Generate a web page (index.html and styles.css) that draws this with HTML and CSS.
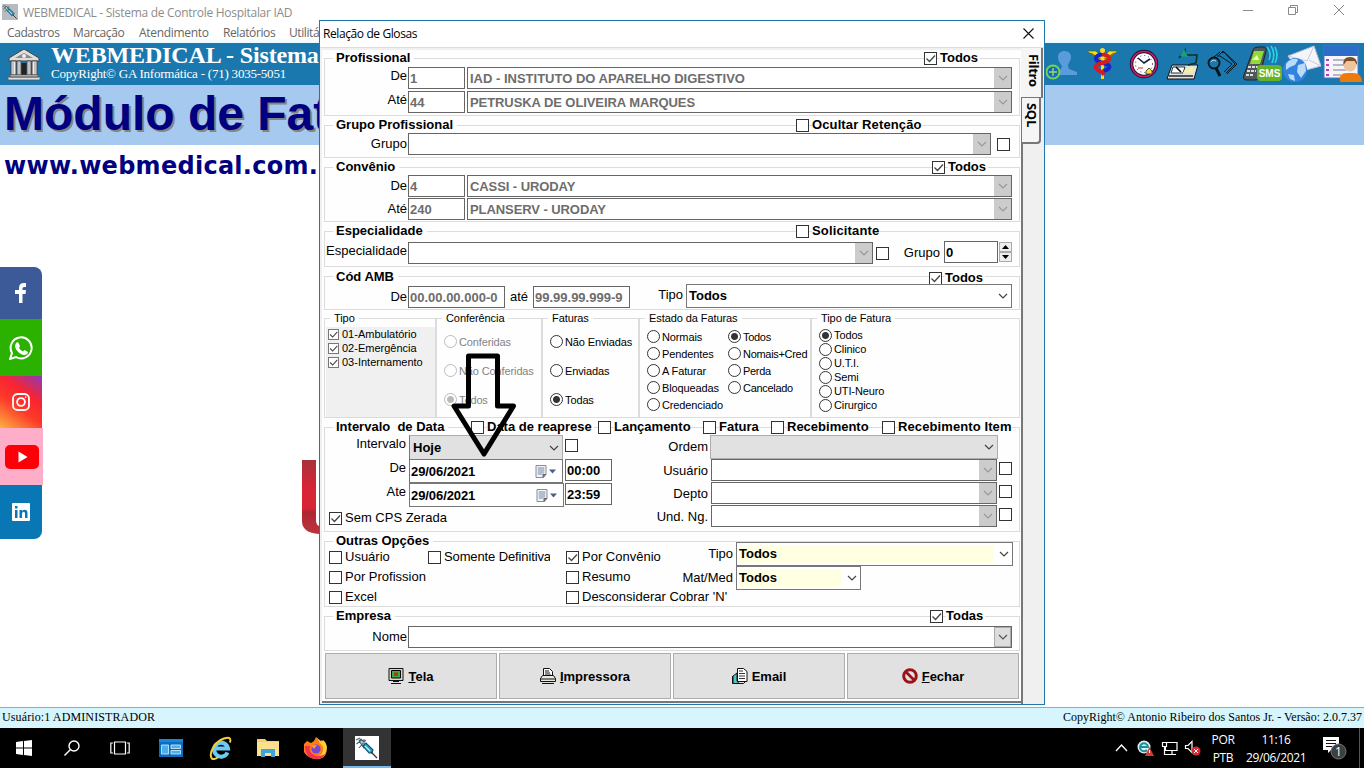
FILE: index.html
```
<!DOCTYPE html>
<html lang="pt-BR">
<head>
<meta charset="utf-8">
<title>WEBMEDICAL - Sistema de Controle Hospitalar IAD</title>
<link rel="stylesheet" href="styles.css">
</head>
<body>
<svg class="defs" width="0" height="0" aria-hidden="true">
  <symbol id="chev" viewBox="0 0 10 6"><path d="M1 1l4 4 4-4" fill="none" stroke="currentColor" stroke-width="1.2"/></symbol>
  <symbol id="tick" viewBox="0 0 13 13"><path d="M2.500 6.500l3 3 5.500-6" fill="none" stroke="#444" stroke-width="1.3"/></symbol>
  <symbol id="cal" viewBox="0 0 22 13"><path d="M1 .5h10v9l-2.500 3H1z" fill="#f2f4f8" stroke="#8a8a90"/><path d="M2.500 3h7M2.500 5h7M2.500 7h7M2.500 9h5M4 2v8M6 2v8M8 2v7" stroke="#8fa0bd" stroke-width=".8"/><path d="M8 12.500v-3h3" fill="#777" stroke="#666"/><path d="M14 4.500h7l-3.500 4z" fill="#41618f"/></symbol>
  <symbol id="syringe" viewBox="0 0 24 24"><path d="M4 5l2-2 6 6-3 3zM1 4l4-2M1.500 8l5-4M4 12l7-8M9 3v3" fill="#a9cbd8" stroke="#46626e" stroke-width="1.100"/><path d="M8 10l3-3 7 7-1 3-3 0z" fill="#27a5c4" stroke="#174c73" stroke-width="1.100"/><path d="M10 10l5 5" fill="none" stroke="#bfeef5" stroke-width="1.200"/><path d="M16 16l6 6" stroke="#333" stroke-width="1.300"/></symbol>
</svg>
<div class="app">
  <header class="titlebar">
    <svg class="app-ico" width="16" height="16" viewBox="0 0 24 24"><use href="#syringe"/></svg>
    <span class="app-title">WEBMEDICAL - Sistema de Controle Hospitalar IAD</span>
    <svg class="winctl" width="102" height="12" viewBox="0 0 102 12" fill="none" stroke="#8a8a8a"><path d="M0 6.500h10M45.500 3.500h7v7h-7zM47.500 3V1.500h7v7H53M91 1l10 10M101 1L91 11"/></svg>
  </header>
  <nav class="menubar"><span class="m1">Cadastros</span><span class="m2">Marcação</span><span class="m3">Atendimento</span><span class="m4">Relatórios</span><span>Utilitários</span></nav>
  <div class="brandbar">
    <svg class="bank" width="34" height="34" viewBox="0 0 34 34"><path d="M2 11L17 2l15 9v3H2z" fill="#ddd" stroke="#444"/><path d="M8 11l9-5 9 5z" fill="#888"/><circle cx="17" cy="9" r="2" fill="#eee"/><path d="M4 14h5v14H4zM10 14h4v14h-4zM20 14h4v14h-4zM25 14h5v14h-5z" fill="#eee" stroke="#444"/><path d="M14.500 16h5v12h-5z" fill="#222"/><path d="M6 15v12M12 15v12M22 15v12M28 15v12" stroke="#999"/><path d="M3 28h28v2H3zM1 30h32v3H1z" fill="#ddd" stroke="#555" stroke-width=".8"/></svg>
    <div class="brand"><b>WEBMEDICAL - Sistema</b><span>CopyRight© GA Informática - (71) 3035-5051</span></div>
    <div class="tools">
      <svg width="34" height="34" viewBox="0 0 34 34"><path d="M12 10c0-8 13-8 13 0 0 4-3 6-3 9l1 3 8 3v3H11v-3l4-3 1-3c-2-3-4-5-4-9z" fill="#5a9bdc"/><circle cx="7" cy="25" r="6.500" fill="#1b63c8" stroke="#6fd84a" stroke-width="2"/><path d="M7 21v8M3 25h8" stroke="#8fe04e" stroke-width="1.500"/></svg>
      <svg width="34" height="34" viewBox="0 0 34 34"><path d="M1 4h9l5 5v5l-7-5zM32 4h-9l-5 5v5l7-5z" fill="#f3df18" stroke="#665c00" stroke-width=".7"/><path d="M5 6l9 6M28 6l-9 6" stroke="#665c00"/><path d="M16.500 4v28" stroke="#f5dc20" stroke-width="3"/><path d="M17 7c-10 2-9 7 0 9s8 6 0 8" fill="none" stroke="#1526c9" stroke-width="4"/><path d="M16 7c10 2 9 7 0 9s-8 6 0 9l2 3" fill="none" stroke="#db1920" stroke-width="4"/><circle cx="16.500" cy="3.500" r="2.500" fill="#f5dc20"/></svg>
      <svg width="34" height="34" viewBox="0 0 34 34"><circle cx="18" cy="17" r="12.500" fill="#fff" stroke="#201030" stroke-width="3.500"/><circle cx="18" cy="17" r="12.500" fill="none" stroke="#cf1f62" stroke-width="1.600"/><circle cx="18" cy="17" r="8.500" fill="none" stroke="#238" stroke-dasharray="1 3"/><path d="M12 11l6 5 6-4" fill="none" stroke="#14233b" stroke-width="1.600"/><path d="M20 27v-3l3-3 3 3v3z" fill="#f8df40" stroke="#332" stroke-width=".8"/><path d="M12 21h5" stroke="#c33"/></svg>
      <svg width="34" height="34" viewBox="0 0 34 34"><path d="M6 18h26l-4 14H1z" fill="#dfe3e3" stroke="#111"/><path d="M7 20h12l-2 6H5z" fill="#fff" stroke="#234"/><path d="M18 24c2-4 9-5 10-2l-2 4h-9z" fill="#f6eda8"/><path d="M13 11l6-8v5h12l-1 8-8 2" fill="none" stroke="#0a3020" stroke-width="1.500"/><path d="M14 9l4-7 4 8z" fill="#12a572"/><path d="M3 29h24" stroke="#555" stroke-width="2"/><path d="M10 20l5 5" stroke="#000" stroke-width="1.500"/></svg>
      <svg width="34" height="34" viewBox="0 0 34 34" fill="none" stroke="#06141c"><path d="M13 8l4-4 14 13-10 10M16 6l2-1 11 12-9 9M11 9l3 0 12 8-8 8"/><path d="M8 10l6-5"/><circle cx="8" cy="16" r="5.500" stroke-width="1.800"/><path d="M10 21l4 8" stroke-width="3"/><path d="M5 15c1-2 3-2 5-1" stroke="#cde"/></svg>
      <svg width="42" height="38" viewBox="0 0 42 38"><path d="M11 5q1-3 5-3h5q4 0 3 4l-6 24q-1 5-5 5H5q-5 0-3-5z" fill="#51585a" stroke="#222"/><path d="M12 6h10l-4 13H8z" fill="#8fdc36"/><path d="M10 15l5-5 2 5z" fill="#e7ffc0"/><path d="M6 22h10M5 26h9M4 30h8" stroke="#ddd" stroke-width="2" stroke-dasharray="3 1"/><path d="M25 2q5 6 2 13M29 1q5 7 1 17M33 2q4 8 0 16" fill="none" stroke="#29d4e8" stroke-width="1.600"/><rect x="15" y="20" width="25" height="16" rx="4" fill="#66b32a"/><text x="27.500" y="32" text-anchor="middle" class="sms">SMS</text></svg>
      <svg width="40" height="38" viewBox="0 0 40 38"><path d="M6 11L32 1l7 20-22 6z" fill="#f4f5fb" stroke="#b9bdd0"/><path d="M6 11l19 5 7-15M39 21L27 15" fill="none" stroke="#c4c8dc"/><circle cx="13" cy="25" r="12" fill="#3282df"/><path d="M4 19c4-6 10-6 12-4l-3 5-5 2-4 3zM16 20l7-2 1 8-5 7-4-6zM6 29l6 1 1 6-5-2z" fill="#b9dcfa"/></svg>
      <svg width="40" height="38" viewBox="0 0 40 38"><path d="M1 1h34v32H1z" fill="#f5f5fb" stroke="#4a77bf"/><path d="M1 1h34v10H1z" fill="#2d6dc8"/><path d="M10 15h14M10 20h12M10 25h13M10 30h8" stroke="#b6b9c5" stroke-width="2"/><path d="M3 15h3M3 20h3M3 25h3M3 30h3" stroke="#c535c8" stroke-width="2"/><path d="M17 37q-2-9 7-9h6q9 0 9 9z" fill="#ee7a0c"/><circle cx="27" cy="20" r="6.500" fill="#efc49a"/><path d="M20.500 20q-1-8 6.500-8t7 8l-2.500-4h-8z" fill="#7b4c28"/></svg>
    </div>
  </div>
  <div class="banner">Módulo de Faturamento</div>
  <main class="desktop">
    <div class="site">www.webmedical.com.br</div>
    <aside class="social">
      <a class="fb"><svg width="14" height="22" viewBox="0 0 14 22"><path d="M5 21V12H1V8h4V6q0-5 5-5h2v4h-2q-1.500 0-1.500 1.500V8H12l-.5 4h-3v9z" fill="#fff"/></svg></a>
      <a class="wa"><svg width="24" height="24" viewBox="0 0 24 24"><path d="M1 23l2-6a10.500 10.500 0 1 1 4 4z" fill="none" stroke="#fff" stroke-width="2"/><path d="M7 7l2-1 2 4-1 2q1.500 2.500 4 3.500l1.500-1.500 3.500 2q0 3-4 3c-4-.5-9-5-9-9.500z" fill="#fff"/></svg></a>
      <a class="ig"><svg width="18" height="18" viewBox="0 0 18 18" fill="none" stroke="#fff" stroke-width="1.800"><rect x="1" y="1" width="16" height="16" rx="4.500"/><circle cx="9" cy="9" r="3.900"/><path d="M13 4.200h1.200"/></svg></a>
      <a class="yt"><svg width="36" height="26" viewBox="0 0 36 26"><rect x="1" y="1" width="34" height="24" rx="5" fill="#fb0007"/><path d="M14.500 7.500v11l9-5.500z" fill="#fff"/></svg></a>
      <a class="li"><svg width="18" height="18" viewBox="0 0 18 18"><rect width="18" height="18" rx="1" fill="#fff"/><path d="M3 7h2.500v8H3zM3 3h2.500v2.500H3zM7.500 7H10v1.200Q11 6.800 12.500 6.800q3 0 3 3.200v5H13v-4.500q0-1.700-1.300-1.700T10 10.500V15H7.500z" fill="#0a78b4"/></svg></a>
    </aside>
    <svg class="logo" width="17" height="74" viewBox="0 0 17 74"><defs><linearGradient id="lg" x2="0" y2="1"><stop offset="0" stop-color="#a83238"/><stop offset=".4" stop-color="#d92435"/><stop offset=".65" stop-color="#d62436"/><stop offset=".7" stop-color="#b02630"/><stop offset="1" stop-color="#b93540"/></linearGradient></defs><path d="M0 0h14v60q0 5 3 6v8Q0 73 0 61z" fill="url(#lg)"/></svg>
  </main>
  <footer class="status"><span>Usuário:1 ADMINISTRADOR</span><span class="copy">CopyRight© Antonio Ribeiro dos Santos Jr. - Versão: 2.0.7.37</span></footer>
  <footer class="taskbar">
    <div class="tk"><svg width="16" height="16" viewBox="0 0 16 16"><path d="M0 2l7-1v6.500H0zM8 1l8-1v7.500H8zM0 8.500h7V15l-7-1zM8 8.500h8V16l-8-1z" fill="#fff"/></svg></div>
    <div class="tk"><svg width="16" height="16" viewBox="0 0 16 16" fill="none" stroke="#fff" stroke-width="1.400"><circle cx="10" cy="6" r="5"/><path d="M6.500 9.500L.5 15.500"/></svg></div>
    <div class="tk"><svg width="20" height="14" viewBox="0 0 20 14" fill="none" stroke="#fff" stroke-width="1.200"><path d="M4.500 1h11v12h-11zM3 2H.8v10H3M17 2h2.200v10H17"/></svg></div>
    <div class="tk t4"><svg width="24" height="18" viewBox="0 0 24 18"><path d="M0 0h24v18H0z" fill="#0d6cbf"/><path d="M0 0h24v3H0z" fill="#1a85dc"/><path d="M2.500 6h7v9h-7zM12 6h9.500v3.500H12zM12 11.500h9.500V15H12z" fill="#47b1ed" stroke="#d8f1ff" stroke-width=".8"/></svg></div>
    <div class="tk"><svg width="23" height="24" viewBox="0 0 23 24"><path d="M18.500 16.500a7 7 0 1 1 .5-4H7" fill="none" stroke="#6ccbf5" stroke-width="4"/><path d="M2.500 22C0 17 5 6 15 2.500c6-2 7 0 6 4M2.500 22c1 2 4 1 7-1" fill="none" stroke="#f4cf39" stroke-width="2"/></svg></div>
    <div class="tk"><svg width="22" height="20" viewBox="0 0 22 20"><path d="M0 1h8l2 2h12v15H0z" fill="#f7cf62"/><path d="M0 4h22v14H0z" fill="#fbe08d"/><path d="M4 19v-8h14v8h-4v-4H8v4z" fill="#3fa4dc"/></svg></div>
    <div class="tk"><svg width="24" height="24" viewBox="0 0 24 24"><path d="M3 5l4 2 3-2 2-4 3 5 3-2 4 6q2 9-4 12T5 21-1 9z" fill="#ff7a1b"/><path d="M12 1l3 5 4 5q1 6-4 9 8 0 8-9-1-5-4-7l-1 2z" fill="#ffcf32"/><path d="M1 10q0 12 11 13 6 0 9-5-6 4-11 1-6-3-4-9z" fill="#f3304e"/><circle cx="12" cy="13" r="4.500" fill="#7447d6"/><path d="M7 9l6 0-3 4z" fill="#ff9a26"/></svg></div>
    <div class="tk active"><div class="syr"><svg width="24" height="24" viewBox="0 0 24 24"><use href="#syringe"/></svg></div></div>
    <div class="tray">
      <svg width="86" height="18" viewBox="0 0 86 18"><path d="M1 12l5.500-6 5.500 6" fill="none" stroke="#fff" stroke-width="1.300"/><circle cx="29" cy="8" r="6.500" fill="#dff3f5"/><path d="M32 11a4 4 0 1 1 1-3h-7" fill="none" stroke="#1d8c9b" stroke-width="2"/><path d="M30 17l4.500-9 4.500 9z" fill="#cf3d35"/><path d="M34.500 11v3" stroke="#fff"/><g fill="none" stroke="#fff" stroke-width="1.200"><path d="M52 3.500h10v8H50.500V8M57 12v3M52 15.500h9M47.500 3.500h4v4h-4zM49.500 7.500v8h3"/><path d="M70.500 6.500H73l4-4v11l-4-4h-2.500z"/></g><circle cx="81" cy="12" r="4.500" fill="#d92b35"/><path d="M79 10l4 4M83 10l-4 4" stroke="#fff"/></svg>
      <div class="two lang"><span>POR</span><span>PTB</span></div>
      <div class="two clock"><span>11:16</span><span>29/06/2021</span></div>
      <svg width="25" height="24" viewBox="0 0 25 24"><path d="M0 1h16v13H8l-3 3v-3H0z" fill="#fff"/><path d="M3 4.500h10M3 7.500h10M3 10.500h6" stroke="#111"/><circle cx="15.500" cy="15.500" r="7.500" fill="#3f3f3f" stroke="#777"/><text x="15.500" y="20" text-anchor="middle" class="num">1</text></svg>
      <i class="peek"></i>
    </div>
  </footer>
</div>

<section class="dialog">
  <div class="dlg-title"><span>Relação de Glosas</span><svg width="11" height="11" viewBox="0 0 11 11"><path d="M.5.5l10 10M10.500.5l-10 10" stroke="#111" stroke-width="1.100"/></svg></div>
  <div class="dlg-body">
    <div class="page">

      <div class="group g1">
        <div class="head h1"><b class="lg">Profissional</b><span></span><label class="ck"><i class="box"><svg><use href="#tick"/></svg></i><b>Todos</b></label></div>
        <div class="row pair"><span class="lb">De</span><div class="in">1</div><div class="cb">IAD - INSTITUTO DO APARELHO DIGESTIVO<i><svg><use href="#chev"/></svg></i></div></div>
        <div class="row pair"><span class="lb">Até</span><div class="in">44</div><div class="cb tight">PETRUSKA DE OLIVEIRA MARQUES<i><svg><use href="#chev"/></svg></i></div></div>
      </div>

      <div class="group g2">
        <div class="head h2"><b class="lg">Grupo Profissional</b><span></span><label class="ck"><i class="box"></i><b class="ocultar">Ocultar Retenção</b></label></div>
        <div class="row grp"><span class="lb mid">Grupo</span><div class="cb"><i><svg><use href="#chev"/></svg></i></div><i class="box"></i></div>
      </div>

      <div class="group g3">
        <div class="head h3"><b class="lg">Convênio</b><span></span><label class="ck"><i class="box"><svg><use href="#tick"/></svg></i><b>Todos</b></label></div>
        <div class="row pair"><span class="lb mid">De</span><div class="in">4</div><div class="cb tight">CASSI - URODAY<i><svg><use href="#chev"/></svg></i></div></div>
        <div class="row pair"><span class="lb mid">Até</span><div class="in">240</div><div class="cb tight">PLANSERV - URODAY<i><svg><use href="#chev"/></svg></i></div></div>
      </div>

      <div class="group g4">
        <div class="head h2"><b class="lg">Especialidade</b><span></span><label class="ck"><i class="box"></i><b class="solic">Solicitante</b></label></div>
        <div class="row esp"><span class="lb mid">Especialidade</span><div class="cb"><i><svg><use href="#chev"/></svg></i></div><i class="box"></i><span class="lb mid">Grupo</span><div class="in dark">0</div><div class="spin"><i><svg viewBox="0 0 7 4"><path d="M0 4l3.500-4L7 4z"/></svg></i><i><svg viewBox="0 0 7 4"><path d="M0 0l3.500 4L7 0z"/></svg></i></div></div>
      </div>

      <div class="group g5">
        <div class="head h5"><b class="lg">Cód AMB</b><span></span><label class="ck"><i class="box"><svg><use href="#tick"/></svg></i><b>Todos</b></label></div>
        <div class="row amb"><span class="lb mid">De</span><div class="in">00.00.00.000-0</div><span class="cen">até</span><div class="in">99.99.99.999-9</div><span class="lb">Tipo</span><div class="sel">Todos<svg><use href="#chev"/></svg></div></div>
      </div>

      <div class="radios">
        <div class="rg r1"><span class="rl">Tipo</span><div class="list"><label><i class="box"><svg><use href="#tick"/></svg></i>01-Ambulatório</label><label><i class="box"><svg><use href="#tick"/></svg></i>02-Emergência</label><label><i class="box"><svg><use href="#tick"/></svg></i>03-Internamento</label></div></div>
        <div class="rg r2 off"><span class="rl">Conferência</span><div class="opts"><label><i></i>Conferidas</label><label><i></i>Não Conferidas</label><label><i class="on"></i>Todos</label></div></div>
        <div class="rg r3"><span class="rl">Faturas</span><div class="opts"><label><i></i>Não Enviadas</label><label><i></i>Enviadas</label><label><i class="on"></i>Todas</label></div></div>
        <div class="rg r4"><span class="rl">Estado da Faturas</span><div class="cols"><div class="opts"><label><i></i>Normais</label><label><i></i>Pendentes</label><label><i></i>A Faturar</label><label><i></i>Bloqueadas</label><label><i></i>Credenciado</label></div><div class="opts"><label><i class="on"></i>Todos</label><label><i></i>Nomais+Cred</label><label><i></i>Perda</label><label><i></i>Cancelado</label></div></div></div>
        <div class="rg r5"><span class="rl">Tipo de Fatura</span><div class="opts"><label><i class="on"></i>Todos</label><label><i></i>Clinico</label><label><i></i>U.T.I.</label><label><i></i>Semi</label><label><i></i>UTI-Neuro</label><label><i></i>Cirurgico</label></div></div>
      </div>

      <div class="group g7">
        <div class="head h7"><b class="lg">Intervalo&nbsp; de Data</b><span></span><label class="ck reap"><i class="box"></i><b>Data de reaprese</b></label><label class="ck"><i class="box"></i><b>Lançamento</b></label><label class="ck"><i class="box"></i><b>Fatura</b></label><label class="ck"><i class="box"></i><b>Recebimento</b></label><label class="ck"><i class="box"></i><b class="item">Recebimento Item</b></label></div>
        <div class="split">
          <div>
            <div class="dt"><span class="lb">Intervalo</span><div class="sel gray noedge">Hoje<svg><use href="#chev"/></svg></div><i class="box"></i></div>
            <div class="dt"><span class="lb">De</span><div class="date">29/06/2021<svg><use href="#cal"/></svg></div><div class="in dark">00:00</div></div>
            <div class="dt"><span class="lb">Ate</span><div class="date wide">29/06/2021<svg><use href="#cal"/></svg></div><div class="in dark">23:59</div></div>
            <label class="ck cps"><i class="box"><svg><use href="#tick"/></svg></i>Sem CPS Zerada</label>
          </div>
          <div class="right">
            <div class="ord"><span class="lb mid">Ordem</span><div class="sel gray">&nbsp;<svg><use href="#chev"/></svg></div></div>
            <div class="usr"><span class="lb mid">Usuário</span><div class="cb"><i><svg><use href="#chev"/></svg></i></div><i class="box"></i></div>
            <div class="usr"><span class="lb mid">Depto</span><div class="cb"><i><svg><use href="#chev"/></svg></i></div><i class="box"></i></div>
            <div class="usr"><span class="lb mid">Und. Ng.</span><div class="cb"><i><svg><use href="#chev"/></svg></i></div><i class="box"></i></div>
          </div>
        </div>
      </div>

      <div class="group g8">
        <div class="left8">
          <div class="head h8"><b class="lg">Outras Opções</b></div>
          <div class="checks">
            <label class="ck"><i class="box"></i>Usuário</label><label class="ck clip"><i class="box"></i><span>Somente Definitiva</span></label><label class="ck"><i class="box"><svg><use href="#tick"/></svg></i>Por Convênio</label>
            <label class="ck"><i class="box"></i>Por Profission</label><span></span><label class="ck"><i class="box"></i>Resumo</label>
            <label class="ck"><i class="box"></i>Excel</label><span></span><label class="ck long"><i class="box"></i>Desconsiderar Cobrar 'N'</label>
          </div>
        </div>
        <div class="right8">
          <div class="tp"><span class="lb mid">Tipo</span><div class="sel yel"><em>Todos</em><svg><use href="#chev"/></svg></div></div>
          <div class="tp short"><span class="lb mid">Mat/Med</span><div class="sel yel"><em>Todos</em><svg><use href="#chev"/></svg></div></div>
        </div>
      </div>

      <div class="group g9">
        <div class="head h9"><b class="lg">Empresa</b><span></span><label class="ck"><i class="box"><svg><use href="#tick"/></svg></i><b>Todas</b></label></div>
        <div class="row emp"><span class="lb mid">Nome</span><div class="cb live"><i><svg><use href="#chev"/></svg></i></div></div>
      </div>

      <div class="buttons">
        <button><svg width="16" height="16" viewBox="0 0 16 16"><path d="M1 .5h14v12H1z" fill="#d6d6ce" stroke="#111"/><path d="M3.500 2.500h9v7.500h-9z" fill="#3cae36" stroke="#000"/><path d="M6 4.500h4v3.500H6z" fill="#a8372b"/><path d="M3 15.500h10M5 13.500h6" stroke="#111"/></svg><span><u>T</u>ela</span></button>
        <button><svg width="16" height="16" viewBox="0 0 16 16" stroke="#111"><path d="M3.500 8V.5h6l3 3V8" fill="#fff"/><path d="M5 3h4M5 5h5M5 7h6"/><path d="M.5 10.500l2-3h11l2 3v3H.5z" fill="#e8e8e0"/><path d="M.5 11h15M2 15.500h12"/></svg><span><u>I</u>mpressora</span></button>
        <button><svg width="16" height="16" viewBox="0 0 16 16" stroke="#111"><path d="M1 8l4-3v8l2 2.500H1z" fill="#52c6c6"/><path d="M5.500.5h6l3.500 3v10H5.500z" fill="#fff"/><path d="M7 3h4M7 5.500h6M7 8h6M7 10.500h6" stroke="#333"/><path d="M.5 8v7.500h11l2-2" fill="none"/></svg><span>Email</span></button>
        <button><svg width="16" height="16" viewBox="0 0 16 16" fill="none"><circle cx="8" cy="8" r="6.300" stroke="#9d1219" stroke-width="3"/><path d="M4 4l8 8" stroke="#9d1219" stroke-width="2.600"/></svg><span><u>F</u>echar</span></button>
      </div>
    </div>
    <div class="tabs"><div class="tab on">Filtro</div><div class="tab">SQL</div><div class="strip"></div></div>
  </div>
  <svg class="arrow" width="68" height="108" viewBox="0 0 68 108"><path d="M18.500 3h29v50h16L34 101 4 53h14.500z" fill="none" stroke="#000" stroke-width="5" stroke-linejoin="round"/></svg>
</section>
</body>
</html>
```

FILE: styles.css
```
* { box-sizing: border-box; }
body { margin: 0; width: 1364px; height: 768px; overflow: hidden; position: relative; background: #fff; color: #000; font: 13px/16px "Liberation Sans", Arial, sans-serif; }
svg { display: block; flex: none; }
i, em { font-style: normal; }
.defs { position: absolute; }

.app { display: flex; flex-direction: column; height: 768px; }
.titlebar { height: 24px; flex: none; display: flex; align-items: center; padding: 0 19px 0 2px; color: #8c8c8c; font: 12px "Open Sans", sans-serif; }
.app-ico { background: #b8bcc0; }
.app-title { margin-left: 5px; letter-spacing: -.29px; }
.winctl { margin-left: auto; margin-bottom: 4px; }
.menubar { height: 19px; flex: none; display: flex; align-items: center; padding: 0 0 2px 7px; color: #666; font: 12px/17px "Open Sans", sans-serif; letter-spacing: -.4px; background: linear-gradient(#fff 70%, #e8fbff); white-space: nowrap; }
.m1 { width: 66px; } .m2 { width: 66px; } .m3 { width: 84px; letter-spacing: -.3px; } .m4 { width: 66px; }
.brandbar { height: 42px; flex: none; display: flex; background: #1b78ae; padding: 0; }
.bank { margin: 4px 0 0 7px; }
.brand { display: flex; flex-direction: column; margin-left: 10px; color: #fff; font-family: "Liberation Serif", serif; white-space: nowrap; width: 268px; }
.brand b { font-size: 24px; line-height: 24px; height: 23px; letter-spacing: -.15px; }
.brand span { font-size: 13px; line-height: 15px; letter-spacing: -.22px; }
.tools { margin-left: auto; display: flex; align-items: flex-start; width: 318px; gap: 6px; padding-top: 4px; }
.tools svg:nth-child(n+6) { margin-top: -2px; }
.tools svg:nth-child(6) { margin-left: -4px; }
.tools svg:nth-child(7) { margin-left: -8px; }
.tools svg:nth-child(8) { margin-left: -5px; }
.sms { font: bold 10px "Liberation Sans", sans-serif; fill: #fff; }
.banner { height: 60px; flex: none; background: #a6c9ef; color: #000080; font: bold 48px/58px "Liberation Sans", sans-serif; padding-left: 4px; text-shadow: 2px 2px 0 #848484; white-space: nowrap; overflow: hidden; }
.desktop { flex: 1; background: #fff; display: grid; grid-template-columns: 302px auto; grid-template-rows: 122px auto; align-items: start; }
.site { grid-column: 1 / 3; color: #000080; font: bold 24px/28px "DejaVu Sans", sans-serif; letter-spacing: .27px; padding: 7px 0 0 4px; }
.social { width: 43px; }
.social a { display: flex; align-items: center; justify-content: center; width: 42px; }
.fb { height: 52px; background: #3d5a98; border-radius: 0 8px 0 0; }
.wa { height: 57px; background: #2bb200; }
.ig { height: 52px; background: linear-gradient(35deg, #fbb040 0, #fd3a2a 40%, #f92430 65%, #8a3ab9); }
.social .yt { height: 57px; width: 43px; background: #ffaeca; }
.li { height: 54px; background: #0877b3; border-radius: 0 0 8px 0; }
.logo { margin-top: 193px; }
.status { height: 21px; flex: none; display: flex; justify-content: space-between; border-top: 1px solid #9aa; background: #d7f5fd; padding: 0 2px 0 2px; font: 12px/18px "Liberation Serif", serif; }
.status span:first-child { letter-spacing: .12px; }

.taskbar { height: 40px; flex: none; background: #000; display: flex; color: #fff; }
.tk { width: 48px; display: flex; align-items: center; justify-content: center; }
.t4 { width: 54px; }
.tk:nth-child(5) { width: 44px; }
.tk.active { background: #333; border-bottom: 2px solid #76b9ed; margin-left: 5px; }
.tk:nth-child(6) { width: 52px; }
.tk:nth-child(7) { width: 44px; }
.syr { background: #fff; margin-top: 2px; }
.tray { margin-left: auto; display: flex; align-items: center; font: 12px/18px "Open Sans", sans-serif; }
.two { display: flex; flex-direction: column; text-align: center; letter-spacing: -.35px; padding-top: 1px; }
.lang { margin-left: 10px; width: 24px; margin-right: 11px; }
.clock { width: 60px; margin-right: 17px; }
.num { font: 12px "Open Sans", sans-serif; fill: #fff; }
.peek { width: 1px; height: 40px; background: #555; margin-left: 11px; margin-right: 4px; }

.dialog { position: absolute; left: 319px; top: 20px; width: 726px; height: 685px; border: 1px solid #1f78ad; background: #fff; display: flex; flex-direction: column; }
.dlg-title { height: 26px; flex: none; display: flex; align-items: center; justify-content: space-between; padding: 0 10px 2px 3px; font: 12px "Open Sans", sans-serif; letter-spacing: -.4px; }
.dlg-body { flex: 1; display: flex; background: #f0f0f0; border-top: 1px solid #ddd; }
.page { width: 700px; margin: 2px 0 1px 2px; background: #fefefe; padding: 8px 1px 0 2px; border-bottom: 2px solid #777; display: flex; flex-direction: column; }
.tabs { width: 22px; margin-left: -1px; display: flex; flex-direction: column; }
.tab { writing-mode: vertical-rl; font: bold 13px/14px "Open Sans", sans-serif; letter-spacing: -.3px; width: 22px; height: 50px; padding: 6px 0 0 0; border-right: 2px solid #777; border-bottom: 1px solid #777; background: #f5f5f5; }
.tab + .tab { height: 46px; width: 20px; border-left: 1px solid #777; border-bottom: 2px solid #777; border-radius: 0 0 4px 0; padding-top: 5px; }
.strip { flex: 1; border-left: 2px solid #777; }

.group { border: 1px solid #dcdcdc; width: 696px; flex: none; }
.head { display: grid; height: 16px; margin-top: -9px; align-items: center; }
.lg, .head .ck b { background: #fefefe; }
.lg { justify-self: start; padding: 0 4px 0 3px; margin-left: 8px; white-space: nowrap; }
.ck { display: flex; align-items: center; gap: 3px; white-space: nowrap; justify-self: start; min-width: 0; }
.box { width: 13px; height: 13px; border: 1px solid #333; background: #fff; flex: none; display: block; }
.box svg { width: 13px; height: 13px; margin: -1px; }
.row { display: grid; height: 22px; }
.lb { text-align: right; line-height: 16px; white-space: nowrap; padding-right: 1px; }
.mid { align-self: center; }
.in, .cb { border: 1px solid #666; height: 22px; line-height: 21px; background: #fff; color: #6d6d6d; font-weight: bold; white-space: nowrap; }
.in { padding-left: 1px; }
.in.dark { color: #000; }
.cb { display: flex; padding-left: 2px; }
.cb.tight { letter-spacing: -.08px; }
.cb i { margin-left: auto; width: 17px; background: #ccc; display: flex; align-items: center; justify-content: center; color: #999; }
.cb.live i { background: #ddd; color: #555; border: 1px solid #aaa; }
.cb i svg, .sel svg { width: 10px; height: 6px; }
.sel { border: 1px solid #777; background: #fff; height: 24px; font-weight: bold; display: flex; align-items: center; justify-content: space-between; padding: 0 3px 0 2px; color: #000; }
.sel svg { color: #444; }
.sel.gray { background: #e1e1e1; border-color: #adadad; }
.sel.noedge { border-left-color: #777; border-bottom: 0; padding-left: 3px; }
.pair { grid-template-columns: 83px 57px 545px; }
.pair .cb { margin-left: 2px; width: 545px; }

.g1 { height: 58px; margin-bottom: 9px; }
.h1 { grid-template-columns: 1fr 0 95px; }
.h1 .ck b, .h3 .ck b, .h5 .ck b, .h9 .ck b { padding-right: 2px; }
.g1 .row { margin-top: 1px; }
.g1 .row .lb { padding-top: 1px; }
.g1 .row + .row { margin-top: 2px; }
.g2 { height: 33px; margin-bottom: 9px; }
.h2 { grid-template-columns: 471px 0 auto; }
.ocultar { letter-spacing: .12px; }
.solic { letter-spacing: .15px; }
.grp { grid-template-columns: 83px 583px 6px 13px; }
.grp .box { grid-column: 4; align-self: center; }
.g3 { height: 55px; margin-bottom: 9px; }
.h3 { grid-template-columns: 1fr 0 87px; }
.g3 .row + .row { margin-top: 1px; }
.g4 { height: 36px; margin-bottom: 9px; }
.esp { margin-top: 3px; grid-template-columns: 83px 465px 16px 52px 3px 54px 1px 13px; }
.esp .lb:first-child { margin-top: -4px; }
.esp .box { margin: 5px 0 0 3px; }
.esp .in { grid-column: 6; margin-top: -1px; }
.spin { grid-column: 8; display: flex; flex-direction: column; width: 13px; height: 20px; }
.spin i { flex: 1; border: 1px solid #aaa; background: #eee; display: flex; align-items: center; justify-content: center; }
.spin svg { width: 7px; height: 4px; }
.g5 { height: 34px; margin-bottom: 8px; }
.h5 { grid-template-columns: 1fr 0 90px; }
.h5 .ck { padding-top: 2px; }
.amb { margin-top: 2px; grid-template-columns: 83px 97px 28px 97px 54px 2px 326px; }
.amb .sel { grid-column: 7; margin-top: -2px; }
.amb .lb:nth-child(5) { margin-top: 1px; }
.cen { text-align: center; align-self: center; }

.radios { display: grid; grid-template-columns: 112px 106px 97px 172px 209px; width: 696px; height: 100px; margin-bottom: 9px; font-size: 11px; line-height: 14px; flex: none; }
.rg { border: 1px solid #dcdcdc; min-width: 0; }
.rl { display: block; width: fit-content; height: 14px; margin: -8px 0 0 5px; padding: 0 4px; background: #fefefe; white-space: nowrap; letter-spacing: -.08px; }
.rg label { display: flex; align-items: center; gap: 3px; white-space: nowrap; }
.list { background: #f0f0f0; margin: 2px 0 0 1px; height: 90px; }
.list label { height: 14px; }
.list .box { width: 11px; height: 11px; border-color: #777; margin-left: 2px; }
.list svg { width: 11px; height: 11px; }
.opts { letter-spacing: -.12px; }
.opts i { width: 13px; height: 13px; border: 1px solid #333; border-radius: 50%; flex: none; background: #fff; }
.opts i.on { background: radial-gradient(circle, #333 3px, #fff 4px); }
.rg .opts label { gap: 2px; }
.r2 .opts, .r3 .opts { padding: 2px 0 0 7px; }
.r2 label, .r3 label { height: 29px; }
.off label { color: #838383; }
.off i { border-color: #bbb; }
.off i.on { background: radial-gradient(circle, #bbb 3px, #fff 4px); }
.r4 .cols { display: grid; grid-template-columns: 81px auto; padding: 3px 0 0 7px; }
.r4 label { height: 17px; }
.r4 .opts + .opts { letter-spacing: -.3px; }
.r5 .opts { padding: 3px 0 0 7px; }
.r5 label { height: 14px; }

.g7 { height: 105px; margin-bottom: 9px; }
.h7 { grid-template-columns: 146px 0 127px 105px 68px 111px 1fr; }
.reap b { width: 107px; overflow: hidden; }
.item { letter-spacing: .1px; }
.split { display: grid; grid-template-columns: 325px 369px; }
.dt { display: grid; grid-template-columns: 82px 2px 154px 2px 47px; height: 24px; }
.dt .lb { padding-top: 1px; }
.dt > :nth-child(2) { grid-column: 3; }
.dt > :nth-child(3) { grid-column: 5; }
.dt .box { margin-top: 4px; }
.date { border: 1px solid #777; height: 24px; font-weight: bold; line-height: 23px; padding: 0 5px 0 1px; display: flex; align-items: center; justify-content: space-between; background: #fff; letter-spacing: -.08px; }
.date svg { width: 22px; height: 13px; }
.date.wide { width: 155px; }
.cps { margin: 3px 0 0 4px; }
.ord { display: grid; grid-template-columns: 59px 1px 288px; height: 24px; }
.ord .sel { grid-column: 3; }
.usr { display: grid; grid-template-columns: 59px 2px 286px 2px 13px; height: 23px; }
.usr .cb { grid-column: 3; }
.usr .box { grid-column: 5; margin-top: 3px; }

.g8 { height: 66px; margin-bottom: 9px; display: grid; grid-template-columns: 346px 342px; }
.left8 { min-width: 0; }
.h8 { width: 120px; }
.checks { display: grid; grid-template-columns: 99px 138px 1fr; grid-template-rows: 20px 20px 20px; padding: 0 0 0 4px; margin-top: -2px; align-items: center; }
.clip { width: 122px; letter-spacing: -.12px; }
.clip span { overflow: hidden; }
.tp { display: grid; grid-template-columns: 63px 2px 277px; height: 24px; }
.tp .sel { grid-column: 3; padding-left: 2px; }
.short { width: 190px; }
.short .sel { width: 125px; }
.sel em { flex: 1; background: #ffffe1; line-height: 18px; margin-right: 6px; }
.g9 { height: 35px; margin-bottom: 2px; }
.h9 { grid-template-columns: 1fr 0 89px; }
.emp { grid-template-columns: 83px 604px; margin-top: 2px; }
.buttons { display: grid; grid-template-columns: repeat(4, 172px); column-gap: 2px; padding-left: 1px; }
.buttons button { height: 46px; border: 1px solid #adadad; background: #e1e1e1; font: bold 13px "Liberation Sans", sans-serif; display: flex; align-items: center; justify-content: center; gap: 4px; padding: 0; color: #000; }
.arrow { position: absolute; left: 130px; top: 332px; }
```
